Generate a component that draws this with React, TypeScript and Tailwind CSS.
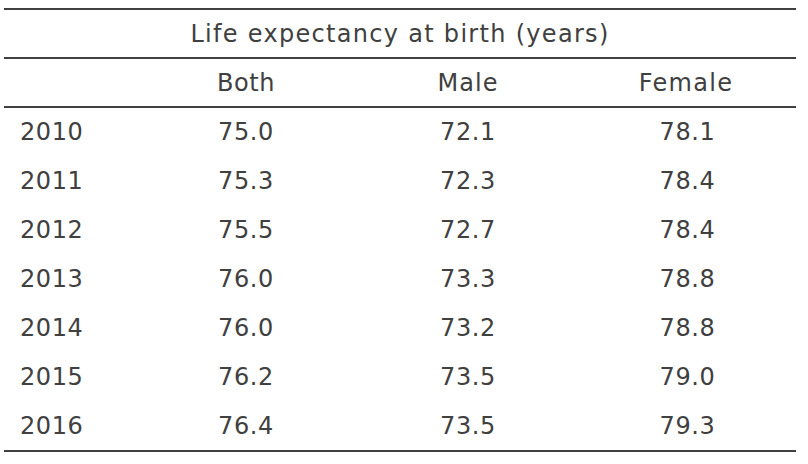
import React from "react";

const rows = [
  ["2010", "75.0", "72.1", "78.1"],
  ["2011", "75.3", "72.3", "78.4"],
  ["2012", "75.5", "72.7", "78.4"],
  ["2013", "76.0", "73.3", "78.8"],
  ["2014", "76.0", "73.2", "78.8"],
  ["2015", "76.2", "73.5", "79.0"],
  ["2016", "76.4", "73.5", "79.3"],
];

export default function App() {
  return (
    <div className="w-[808px] h-[464px] bg-white pt-2 px-1 text-[#404040] text-[24px] leading-none" style={{ fontFamily: '"DejaVu Sans", Verdana, sans-serif' }}>
      <div className="w-[792px] border-t-2 border-b-2 border-[#404040]">
        <div className="h-[49px] flex items-center justify-center border-b-2 border-[#404040]">
          <span className="pt-[1px] tracking-[1.3px]">Life expectancy at birth (years)</span>
        </div>
        <div className="h-[49px] grid grid-cols-[128px_228px_216px_220px] items-center border-b-2 border-[#404040]">
          <div></div>
          <div className="text-center tracking-[0.5px]">Both</div>
          <div className="text-center tracking-[1px]">Male</div>
          <div className="text-center tracking-[1.3px]">Female</div>
        </div>
        {rows.map((r) => (
          <div key={r[0]} className="h-[48.86px] grid grid-cols-[128px_228px_216px_220px] items-center tracking-[0.6px]">
            <div className="pl-4">{r[0]}</div>
            <div className="text-center">{r[1]}</div>
            <div className="text-center">{r[2]}</div>
            <div className="text-center pl-[3px]">{r[3]}</div>
          </div>
        ))}
      </div>
    </div>
  );
}
